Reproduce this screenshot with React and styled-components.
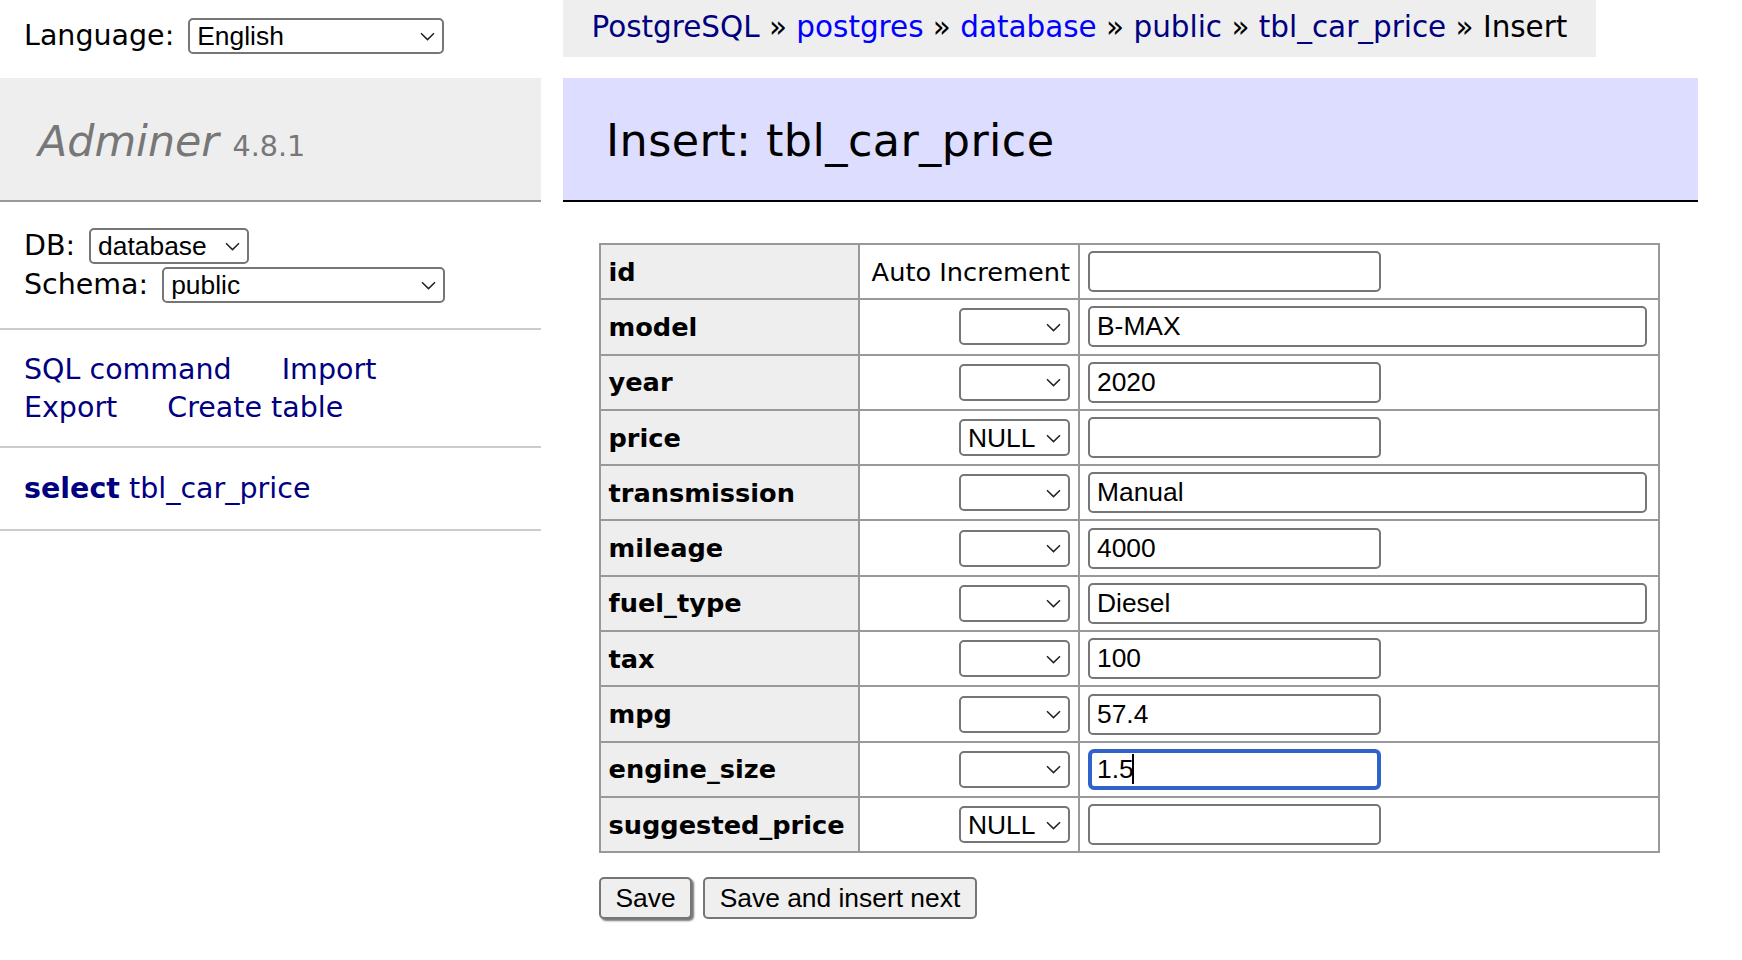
import React from "react";
import styled, { createGlobalStyle, css } from "styled-components";

const GlobalStyle = createGlobalStyle`
  html, body {
    margin: 0;
    padding: 0;
    background: #fff;
  }
  body {
    font-family: "DejaVu Sans", Verdana, sans-serif;
    font-size: 28.5px;
    line-height: 1.25;
    color: #000;
  }
`;

const fields = [
  { name: "id", auto: true, value: "" },
  { name: "model", fn: "", value: "B-MAX", wide: true },
  { name: "year", fn: "", value: "2020" },
  { name: "price", fn: "NULL", value: "" },
  { name: "transmission", fn: "", value: "Manual", wide: true },
  { name: "mileage", fn: "", value: "4000" },
  { name: "fuel_type", fn: "", value: "Diesel", wide: true },
  { name: "tax", fn: "", value: "100" },
  { name: "mpg", fn: "", value: "57.4" },
  { name: "engine_size", fn: "", value: "1.5", active: true },
  { name: "suggested_price", fn: "NULL", value: "" },
];

const Chevron = () => (
  <ChevronIcon width="15" height="9" viewBox="0 0 15 9">
    <path d="M1 1.2 L7.5 7.6 L14 1.2" fill="none" stroke="#222" strokeWidth="1.5" />
  </ChevronIcon>
);

const Select = ({ width, height = 36, value }) => (
  <SelectWrap>
    <SelectEl $w={width} $h={height} defaultValue={value}>
      <option value={value}>{value}</option>
    </SelectEl>
    <Chevron />
  </SelectWrap>
);

const App = () => {
  return (
    <>
      <GlobalStyle />
      <Page>
        <Sidebar>
          <LangBar>
            <span>Language:</span>
            <Select width={256} value="English" />
          </LangBar>
          <Logo>
            Adminer <Version>4.8.1</Version>
          </Logo>
          <MenuSection $pad="26px 24px 25px">
            <DbRow>
              <span>DB:</span>
              <Select width={160} value="database" />
            </DbRow>
            <DbRow>
              <span>Schema:</span>
              <Select width={283} value="public" />
            </DbRow>
          </MenuSection>
          <MenuSection $pad="22px 24px 21px">
            <LinkList>
              <MenuLink $visited>SQL command</MenuLink>
              <MenuLink $visited>Import</MenuLink>
              <MenuLink $visited>Export</MenuLink>
              <MenuLink $visited>Create table</MenuLink>
            </LinkList>
          </MenuSection>
          <MenuSection>
            <MenuLink $visited $bold>select</MenuLink>{" "}
            <MenuLink $visited>tbl_car_price</MenuLink>
          </MenuSection>
        </Sidebar>

        <Content>
          <Breadcrumb>
            <MenuLink $visited>PostgreSQL</MenuLink> »{" "}
            <MenuLink>postgres</MenuLink> » <MenuLink>database</MenuLink> »{" "}
            <MenuLink $visited>public</MenuLink> »{" "}
            <MenuLink $visited>tbl_car_price</MenuLink> » Insert
          </Breadcrumb>
          <Heading>Insert: tbl_car_price</Heading>

          <form>
            <EditTable>
              <colgroup>
                <col style={{ width: 259 }} />
                <col style={{ width: 220 }} />
                <col style={{ width: 580 }} />
              </colgroup>
              <tbody>
                {fields.map((f) => (
                  <tr key={f.name}>
                    <NameCell>{f.name}</NameCell>
                    <FuncCell>
                      {f.auto ? "Auto Increment" : <Select width={111} height={37} value={f.fn} />}
                    </FuncCell>
                    <ValueCell>
                      <FieldWrap>
                        <Field $wide={f.wide} $active={f.active} defaultValue={f.value} readOnly />
                        {f.active && <Caret />}
                      </FieldWrap>
                    </ValueCell>
                  </tr>
                ))}
              </tbody>
            </EditTable>
            <Buttons>
              <Button type="button" $default>Save</Button>
              <Button type="button">Save and insert next</Button>
            </Buttons>
          </form>
        </Content>
      </Page>
    </>
  );
};

const Page = styled.div`
  display: flex;
  align-items: flex-start;
  width: 1742px;
  min-height: 960px;
`;

const Sidebar = styled.div`
  flex: none;
  width: 541px;
`;

const LangBar = styled.div`
  display: flex;
  align-items: center;
  gap: 14px;
  box-sizing: border-box;
  height: 78px;
  padding: 0 0 6px 24px;
`;

const Logo = styled.h1`
  margin: 0;
  padding: 36.5px 0 32px 38px;
  background: #eee;
  border-bottom: 2px solid #999;
  font-size: 42.75px;
  line-height: 53.5px;
  font-weight: normal;
  font-style: italic;
  color: #777;
  white-space: nowrap;
`;

const Version = styled.span`
  font-size: 28.6px;
  line-height: 1;
  font-style: normal;
  color: #777;
`;

const MenuSection = styled.div`
  padding: ${(p) => p.$pad || "22.8px 24px"};
  border-bottom: 2px solid #ccc;
  line-height: 35.6px;
  white-space: nowrap;
`;

const DbRow = styled.div`
  display: flex;
  align-items: center;
  gap: 14px;
  height: 36px;

  & + & {
    margin-top: 3px;
  }
`;

const LinkList = styled.div`
  display: flex;
  flex-wrap: wrap;
  column-gap: 50px;
  row-gap: 2px;
  max-width: 470px;
`;

const MenuLink = styled.a`
  color: ${(p) => (p.$visited ? "#000080" : "#0000ff")};
  text-decoration: none;
  font-weight: ${(p) => (p.$bold ? "bold" : "normal")};
  cursor: pointer;
`;

const SelectWrap = styled.span`
  position: relative;
  display: inline-block;
  flex: none;
  vertical-align: middle;
  line-height: 0;
`;

const SelectEl = styled.select`
  appearance: none;
  -webkit-appearance: none;
  box-sizing: border-box;
  width: ${(p) => p.$w}px;
  height: ${(p) => p.$h}px;
  margin: 0;
  padding: 0 30px 0 7px;
  border: 2px solid #767676;
  border-radius: 5px;
  background: #fff;
  font-family: "Liberation Sans", Arial, sans-serif;
  font-size: 26.4px;
  line-height: normal;
  color: #000;
  outline: none;
`;

const ChevronIcon = styled.svg`
  position: absolute;
  right: 9px;
  top: 50%;
  margin-top: -4px;
  pointer-events: none;
`;

const Content = styled.div`
  flex: none;
  width: 1135px;
  margin-left: 22px;
`;

const Breadcrumb = styled.div`
  display: inline-block;
  box-sizing: border-box;
  height: 57px;
  padding: 0 28.5px;
  background: #eee;
  font-size: 29.45px;
  line-height: 54px;
  white-space: nowrap;
  vertical-align: top;
`;

const Heading = styled.h2`
  margin: 21px 0 0;
  padding: 35px 0 31.5px 43px;
  background: #ddf;
  border-bottom: 2px solid #000;
  font-size: 44.5px;
  line-height: 55.5px;
  font-weight: normal;
  letter-spacing: 0.4px;
  color: #000;
`;

const EditTable = styled.table`
  margin: 41px 0 0 36px;
  width: 1059px;
  table-layout: fixed;
  border-collapse: collapse;
  font-size: 25.65px;

  tr {
    height: 55.3px;
  }

  th,
  td {
    border: 2px solid #999;
    vertical-align: middle;
    padding: 0;
  }
`;

const NameCell = styled.th`
  background: #eee;
  text-align: left;
  font-weight: bold;
  padding-left: 7.5px !important;
  white-space: nowrap;
`;

const FuncCell = styled.td`
  text-align: right;
  padding-right: 8px !important;
  white-space: nowrap;
`;

const ValueCell = styled.td`
  padding-left: 8px !important;
`;

const FieldWrap = styled.span`
  position: relative;
  display: inline-block;
  vertical-align: middle;
  line-height: 0;
`;

const Field = styled.input`
  box-sizing: border-box;
  width: ${(p) => (p.$wide ? 559 : 293)}px;
  height: 41px;
  margin: 0;
  padding: 0 0 0 7px;
  border: 2px solid #767676;
  border-radius: 5px;
  background: #fff;
  font-family: "Liberation Sans", Arial, sans-serif;
  font-size: 26.4px;
  color: #000;
  outline: none;

  ${(p) =>
    p.$active &&
    css`
      border: 4px solid #2f62cb;
      border-radius: 6px;
      padding-left: 5px;
    `}
`;

const Caret = styled.span`
  position: absolute;
  left: 44px;
  top: 5px;
  width: 2px;
  height: 30px;
  background: #000;
`;

const Buttons = styled.div`
  display: flex;
  gap: 11px;
  margin: 24px 0 0 36px;
`;

const Button = styled.button`
  box-sizing: border-box;
  height: 42px;
  margin: 0;
  padding: 0 14.5px;
  border: 2px solid #767676;
  border-radius: 5px;
  background: #efefef;
  font-family: "Liberation Sans", Arial, sans-serif;
  font-size: 26.4px;
  color: #000;
  ${(p) =>
    p.$default &&
    css`
      box-shadow: 2px 2px 2px #777;
    `}
`;

export default App;
